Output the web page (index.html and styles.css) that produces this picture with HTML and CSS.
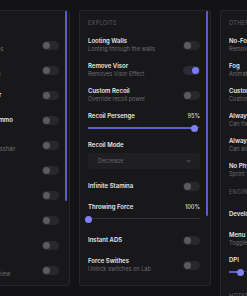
FILE: index.html
```html
<!DOCTYPE html>
<html lang="en">
<head>
    <meta charset="UTF-8">
    <meta name="viewport" content="width=device-width, initial-scale=1.0">
    <title>Menu</title>
    <link rel="stylesheet" href="styles.css">
</head>
<body>
    <div class="viewport">
        <div class="panels">
            <!-- visuals -->
            <section class="panel">
                <div class="thumb thumb-left"></div>
                <div class="panel-body">
                    <div class="section-title">VISUALS</div>
                    <div class="row">
                        <div class="label"><div class="name">Player ESP</div><div class="desc">Show enemy outlines</div></div>
                        <div class="toggle"></div>
                    </div>
                    <div class="row">
                        <div class="label"><div class="name">Loot ESP</div><div class="desc">Highlights loot items</div></div>
                        <div class="toggle"></div>
                    </div>
                    <div class="row">
                        <div class="label"><div class="name">Show Bullet Tracer</div></div>
                        <div class="toggle"></div>
                    </div>
                    <div class="row">
                        <div class="label"><div class="name">Infinite Weapon Ammo</div></div>
                        <div class="toggle"></div>
                    </div>
                    <div class="row">
                        <div class="label"><div class="name">Crosshair</div><div class="desc">Draws a custom crosshair</div></div>
                        <div class="toggle"></div>
                    </div>
                    <div class="row">
                        <div class="label"><div class="name">Night Vision</div></div>
                        <div class="toggle"></div>
                    </div>
                    <div class="row">
                        <div class="label"><div class="name">No Flash</div></div>
                        <div class="toggle"></div>
                    </div>
                    <div class="row">
                        <div class="label"><div class="name">No Smoke</div></div>
                        <div class="toggle"></div>
                    </div>
                    <div class="row">
                        <div class="label"><div class="name">Chams</div></div>
                        <div class="toggle"></div>
                    </div>
                    <div class="row">
                        <div class="label"><div class="name">Wide FOV</div><div class="desc">Expand the field of view</div></div>
                        <div class="toggle"></div>
                    </div>
                </div>
            </section>

            <!-- exploits -->
            <section class="panel">
                <div class="thumb thumb-mid"></div>
                <div class="panel-body">
                    <div class="section-title">EXPLOITS</div>
                    <div class="row">
                        <div class="label"><div class="name">Looting Walls</div><div class="desc">Looting through the walls</div></div>
                        <div class="toggle"></div>
                    </div>
                    <div class="row">
                        <div class="label"><div class="name">Remove Visor</div><div class="desc">Removes Visor Effect</div></div>
                        <div class="toggle on"></div>
                    </div>
                    <div class="row">
                        <div class="label"><div class="name">Custom Recoil</div><div class="desc">Override recoil power</div></div>
                        <div class="toggle"></div>
                    </div>
                    <div class="field">
                        <div class="field-head"><span class="name">Recoil Persenge</span><span class="value">95%</span></div>
                        <div class="slider"><div class="fill" style="width: 95%"></div><div class="knob" style="left: 95%"></div></div>
                    </div>
                    <div class="field">
                        <div class="field-head"><span class="name">Recoil Mode</span></div>
                        <div class="select"><span>Decrease</span><span class="chev"></span></div>
                    </div>
                    <div class="row">
                        <div class="label"><div class="name">Infinite Stamina</div></div>
                        <div class="toggle"></div>
                    </div>
                    <div class="field">
                        <div class="field-head"><span class="name">Throwing Force</span><span class="value">100%</span></div>
                        <div class="slider"><div class="fill" style="width: 0%"></div><div class="knob" style="left: 0%"></div></div>
                    </div>
                    <div class="row">
                        <div class="label"><div class="name">Instant ADS</div></div>
                        <div class="toggle"></div>
                    </div>
                    <div class="row">
                        <div class="label"><div class="name">Force Swithes</div><div class="desc">Unlock switches on Lab</div></div>
                        <div class="toggle"></div>
                    </div>
                    <div class="row">
                        <div class="label"><div class="name">Fast Doors</div></div>
                        <div class="toggle"></div>
                    </div>
                </div>
            </section>

            <!-- other -->
            <section class="panel panel-tall">
                <div class="panel-body">
                    <div class="section-title">OTHER</div>
                    <div class="row">
                        <div class="label"><div class="name">No-Foliage</div><div class="desc">Removes grass and trees</div></div>
                        <div class="toggle"></div>
                    </div>
                    <div class="row">
                        <div class="label"><div class="name">Fog</div><div class="desc">Animated fog</div></div>
                        <div class="toggle"></div>
                    </div>
                    <div class="row">
                        <div class="label"><div class="name">Custom Time</div><div class="desc">Custom time of day</div></div>
                        <div class="toggle"></div>
                    </div>
                    <div class="row">
                        <div class="label"><div class="name">Always Day</div><div class="desc">Can fix dark maps</div></div>
                        <div class="toggle"></div>
                    </div>
                    <div class="row">
                        <div class="label"><div class="name">Always Sprint</div><div class="desc">Can always sprint</div></div>
                        <div class="toggle"></div>
                    </div>
                    <div class="row">
                        <div class="label"><div class="name">No Physical Fatigue</div><div class="desc">Sprint without stamina</div></div>
                        <div class="toggle"></div>
                    </div>
                    <div class="section-title">ENGINE</div>
                    <div class="row">
                        <div class="label"><div class="name">Developer Mode</div></div>
                        <div class="toggle"></div>
                    </div>
                    <div class="row">
                        <div class="label"><div class="name">Menu Key</div><div class="desc">Toggle the menu</div></div>
                        <div class="toggle"></div>
                    </div>
                    <div class="field">
                        <div class="field-head"><span class="name">DPI</span><span class="value">10%</span></div>
                        <div class="slider"><div class="fill" style="width: 10%"></div><div class="knob" style="left: 10%"></div></div>
                    </div>
                    <div class="section-title section-gap">HOTKEYS</div>
                </div>
            </section>
        </div>
    </div>
</body>
</html>
```

FILE: styles.css
```css
* {
    margin: 0;
    padding: 0;
    box-sizing: border-box;
}

body {
    font-family: Inter, "Noto Sans", sans-serif;
    background: #131315;
    width: 247px;
    height: 296px;
    overflow: hidden;
}

.viewport {
    width: 247px;
    height: 296px;
    overflow: hidden;
    padding-top: 10px;
}

.panels {
    display: flex;
    align-items: flex-start;
    gap: 9px;
    margin-left: -62px;
    width: 414px;
}

.panel {
    position: relative;
    flex: 0 0 132px;
    height: 276px;
    background: #18181a;
    border: 1px solid #262629;
    border-radius: 3px;
    overflow: hidden;
}

.panel-tall {
    height: 340px;
}

.thumb {
    position: absolute;
    top: 0;
    right: 2px;
    width: 2px;
    background: #5c5ccc;
    border-radius: 1px;
}

.thumb-left {
    height: 190px;
}

.thumb-mid {
    height: 205px;
}

.panel-body {
    display: flex;
    flex-direction: column;
    gap: 9px;
    padding: 7px 10px 0 8px;
}

.section-title {
    font-size: 5.5px;
    line-height: 10px;
    color: #5d5d63;
    letter-spacing: 0.3px;
}

.section-gap {
    margin-top: 6px;
}

.row {
    display: flex;
    align-items: center;
    justify-content: space-between;
    min-height: 16px;
}

.label {
    white-space: nowrap;
}

.name {
    font-size: 6px;
    font-weight: 600;
    line-height: 8px;
    color: #e6e6e8;
}

.desc {
    font-size: 5.6px;
    line-height: 8px;
    color: #6c6c72;
}

.toggle {
    position: relative;
    flex: 0 0 17px;
    width: 17px;
    height: 9px;
    border-radius: 5px;
    background: #28282b;
}

.toggle::after {
    content: "";
    position: absolute;
    top: 1px;
    left: 1px;
    width: 7px;
    height: 7px;
    border-radius: 50%;
    background: #5b5b5e;
}

.toggle.on {
    background: #2a2a38;
}

.toggle.on::after {
    left: 9px;
    background: #7b7cf2;
}

.field {
    display: flex;
    flex-direction: column;
    gap: 4px;
}

.field-head {
    display: flex;
    justify-content: space-between;
    line-height: 8px;
}

.value {
    font-size: 5.6px;
    font-weight: 500;
    color: #d8d8dc;
}

.slider {
    position: relative;
    height: 8px;
}

.slider::before {
    content: "";
    position: absolute;
    left: 0;
    right: 0;
    top: 3px;
    height: 1px;
    background: #323236;
}

.fill {
    position: absolute;
    left: 0;
    top: 3px;
    height: 2px;
    background: #5f5fc8;
}

.knob {
    position: absolute;
    top: 0.5px;
    width: 7px;
    height: 7px;
    margin-left: -3.5px;
    border-radius: 50%;
    background: #7f80f6;
}

.select {
    display: flex;
    align-items: center;
    justify-content: space-between;
    height: 16px;
    padding: 0 10px;
    background: #1f1f22;
    border-radius: 3px;
    font-size: 5.6px;
    color: #646469;
}

.chev {
    width: 3px;
    height: 3px;
    border-right: 1px solid #55555a;
    border-bottom: 1px solid #55555a;
    transform: rotate(45deg);
    margin-top: -2px;
}
```
